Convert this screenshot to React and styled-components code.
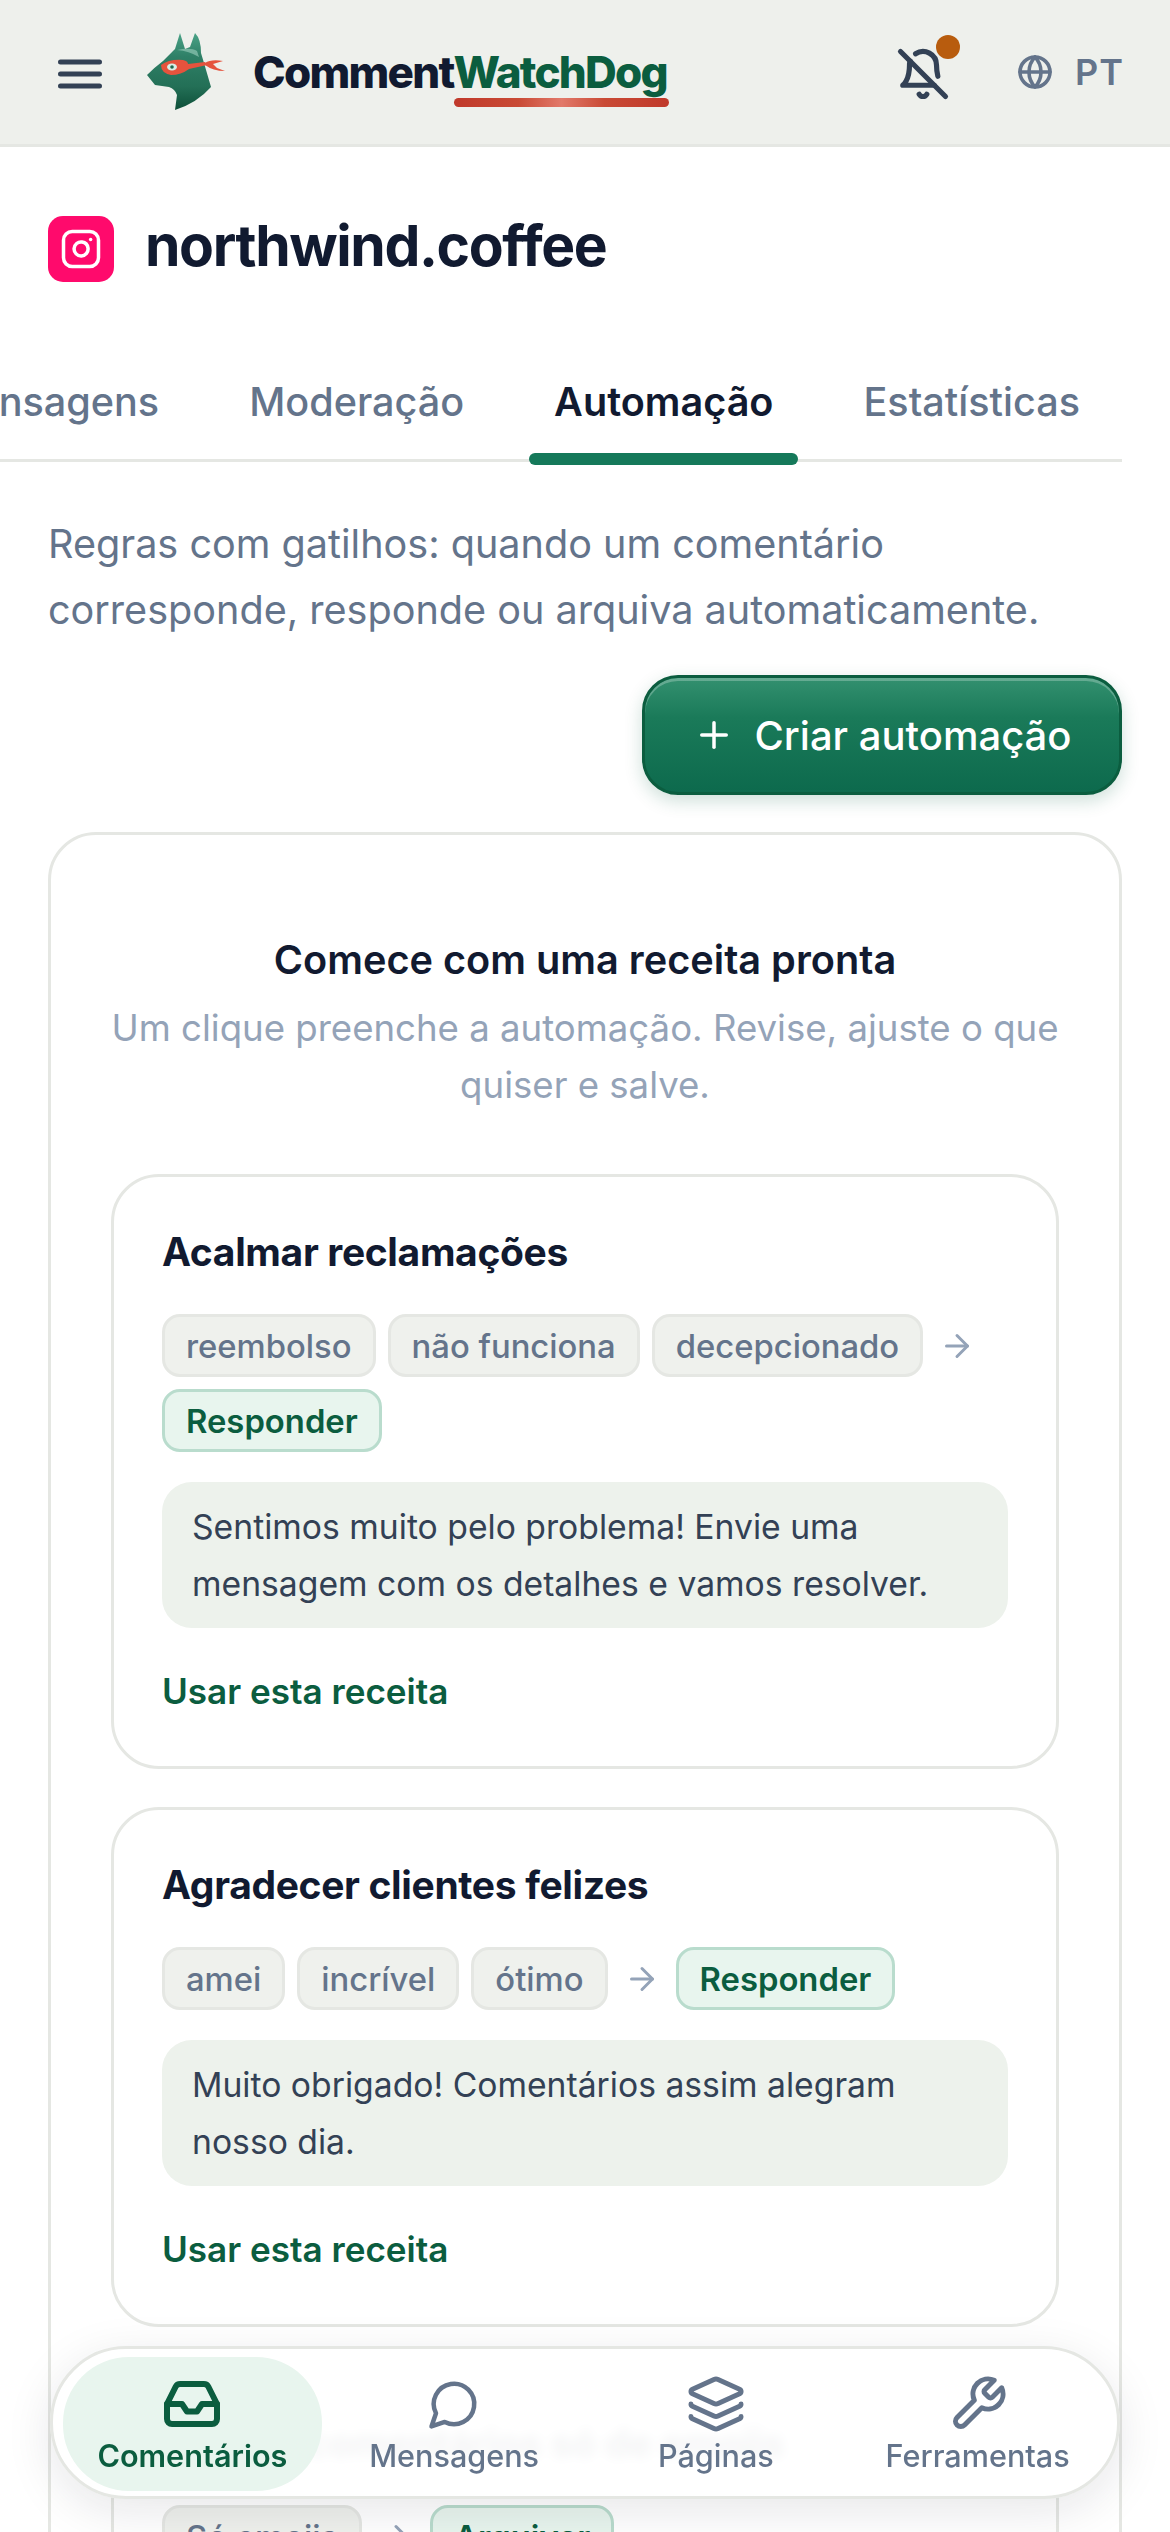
import React from 'react';
import styled, { createGlobalStyle } from 'styled-components';
import { Globe, Plus, Inbox, Layers, ArrowRight, Instagram } from 'lucide-react';

const Global = createGlobalStyle`
  html, body { margin: 0; padding: 0; background: #fff; }
  body { font-family: Inter, "Liberation Sans", sans-serif; width: 1170px; height: 2532px; overflow: hidden; }
  * { box-sizing: border-box; }
`;
const Page = styled.div`width: 1170px; height: 2532px; overflow: hidden; display: flex; flex-direction: column;`;
const Header = styled.header`
  height: 147px; flex: none; background: #eef0ec; border-bottom: 3px solid #e5e7e3;
  display: flex; align-items: center; padding: 0 46px 0 58px;
`;
const MenuBtn = styled.svg`display: block; color: #334155; margin: 3px 45px 0 0; flex: none;`;
const LogoWrap = styled.div`display: flex; align-items: center; gap: 28px; flex: 1;`;
const Word = styled.div`
  font-family: Inter, "Liberation Sans", sans-serif; font-weight: 800; font-size: 44px;
  letter-spacing: -1.75px; color: #111a30; line-height: 1; margin-top: 0;
`;
const WordGreen = styled.span`
  color: #0b5d3f; position: relative; display: inline-block;
  &::after { content: ""; position: absolute; left: 0; right: -2px; bottom: -13px; height: 9px; border-radius: 5px;
    background: linear-gradient(90deg, #c0392b 0%, #c94a35 30%, #e2796a 50%, #c94a35 70%, #c0392b 100%); }
`;
const BellWrap = styled.div`position: relative; display: flex; color: #334155; margin: 3px 67px 0 0;`;
const Dot = styled.span`position: absolute; top: -12px; right: -10px; width: 24px; height: 24px; border-radius: 50%; background: #b85c0e;`;
const Lang = styled.div`display: flex; align-items: center; gap: 22px; color: #64748b; font-size: 36px; font-weight: 600; letter-spacing: 1px; margin-top: -1px;`;
const Main = styled.main`padding: 0 48px; display: flex; flex-direction: column;`;
const TitleRow = styled.div`display: flex; align-items: center; gap: 31px; margin-top: 69px;`;
const IgBadge = styled.div`width: 66px; height: 66px; border-radius: 15px; background: #ff0a6c; color: #fff; display: flex; align-items: center; justify-content: center;`;
const Title = styled.h1`margin: -6px 0 0; font-size: 57px; line-height: 66px; font-weight: 700; letter-spacing: -1.4px; color: #111a30;`;
const Tabs = styled.nav`
  margin: 78px 0 0 -48px; width: 1122px; height: 102px; border-bottom: 3px solid #e5e7e3;
  display: flex; justify-content: flex-end; gap: 40px; padding-right: 17px;
`;
const Tab = styled.div`
  flex: none; padding: 0 25px; height: 99px; line-height: 84px; font-size: 39.6px;
  font-weight: ${p => p.$active ? 600 : 500}; color: ${p => p.$active ? '#111a30' : '#64748b'}; position: relative;
  ${p => p.$active && `&::after { content: ""; position: absolute; left: 0; right: 0; bottom: -6px; height: 12px; border-radius: 6px; background: #15795a; }`}
`;
const Intro = styled.p`margin: 49px 0 0; font-size: 39.6px; line-height: 66px; color: #64748b;`;
const ActionRow = styled.div`display: flex; justify-content: flex-end; margin-top: 32px;`;
const PrimaryBtn = styled.button`
  width: 480px; height: 120px; border-radius: 36px; border: 3px solid #0b5d3f;
  background: linear-gradient(180deg, #33906f 0%, #1a7a59 35%, #0d6a4d 100%);
  box-shadow: inset 0 3px 0 rgba(255,255,255,.25), 0 6px 18px rgba(11,93,63,.2);
  color: #fff; font: 500 40px Inter, sans-serif; display: flex; align-items: center; justify-content: center; gap: 20px;
`;
const Panel = styled.section`
  margin-top: 37px; border: 3px solid #e5e7e3; border-radius: 48px; padding: 95px 60px 0; background: #fff;
  display: flex; flex-direction: column; align-items: stretch;
`;
const PanelTitle = styled.h2`margin: 0; text-align: center; font-size: 39.7px; line-height: 60px; font-weight: 600; color: #111a30;`;
const PanelSub = styled.p`margin: 10px -12px 0; text-align: center; font-size: 36.6px; line-height: 57px; color: #94a3b8;`;
const Recipes = styled.div`display: flex; flex-direction: column; gap: 38px; margin-top: 60px;`;
const Recipe = styled.article`
  border: 3px solid #e5e7e3; border-radius: 48px; padding: 48px 48px 48px; background: #fff;
`;
const RecipeTitle = styled.h3`margin: 0; font-size: 39px; line-height: 54px; font-weight: 700; color: #111a30; letter-spacing: -0.35px;`;
const Chips = styled.div`display: flex; flex-wrap: wrap; align-items: center; gap: 12px; margin-top: 35px;`;
const Chip = styled.span`
  height: 63px; padding: 0 21px; border-radius: 18px; display: inline-flex; align-items: center; font-size: 32.8px; font-weight: ${p => p.$action ? 600 : 500};
  background: ${p => p.$action ? '#e8f5ee' : '#eff1ed'}; border: 3px solid ${p => p.$action ? '#b9dccd' : '#e5e7e3'};
  color: ${p => p.$action ? '#0b5d3f' : '#64748b'};
`;
const Arrow = styled.span`display: inline-flex; color: #94a3b8; margin: 0 4px;`;
const Quote = styled.div`
  margin-top: 30px; padding: 16px 30px; border-radius: 30px; background: #edf2ec; color: #334155;
  font-size: 33.7px; line-height: 57px;
`;
const UseLink = styled.div`margin-top: 36px; font-size: 35.1px; line-height: 54px; font-weight: 600; color: #0b5d3f;`;
const BottomNav = styled.nav`
  position: fixed; left: 50px; top: 2346px; width: 1070px; height: 153px; border-radius: 76px;
  background: rgba(255,255,255,.95); backdrop-filter: blur(6px); border: 3px solid #e5e7e3; box-shadow: 0 12px 48px rgba(15,23,42,.1);
  display: grid; grid-template-columns: repeat(4, 1fr); padding: 8px 10px 5px; gap: 3px;
`;
const NavItem = styled.div`
  border-radius: 66px; display: flex; flex-direction: column; align-items: center; justify-content: center; gap: 1px; padding-top: 3px;
  font-size: 30.6px; line-height: 42px; font-weight: ${p => p.$active ? 600 : 500};
  color: ${p => p.$active ? '#0b5d3f' : '#64748b'}; background: ${p => p.$active ? '#e8f5ee' : 'transparent'};
`;
const LineIcon = styled.svg`display: block; flex: none; fill: none; stroke: currentColor; stroke-width: ${p => p.$weight || 2}; stroke-linecap: round; stroke-linejoin: round;`;

function DogLogo() {
  return (
    <svg width="78" height="78" viewBox="0 0 78 78">
      <defs>
        <linearGradient id="dg" x1="0" y1="0" x2="0" y2="1">
          <stop offset="0" stopColor="#4aa387" />
          <stop offset=".3" stopColor="#2f8067" />
          <stop offset=".7" stopColor="#236f56" />
          <stop offset="1" stopColor="#0d4f38" />
        </linearGradient>
      </defs>
      <path d="M33 0 L38 16 L43 14 L48 0 Q54 6 54 20 L57 30 L64 54 Q50 70 28 77 L30 62 Q28 56 22 54 L8 52 L0 42 Q8 34 16 28 L26 18 L28 16 Z" fill="url(#dg)" />
      <path d="M30 17 Q44 14 50 18 L52 24 Q42 18 30 17 Z" fill="#9fd0bf" opacity=".6" />
      <path d="M14 32 Q22 26 36 27 Q41 28 41 31 L58 29 L60 32 L42 36 Q34 42 24 42 Q14 40 14 32 Z" fill="#e5533d" />
      <ellipse cx="25" cy="34" rx="5" ry="3.5" fill="#d9efe6" />
      <circle cx="25" cy="34" r="1.8" fill="#1f6a50" />
      <path d="M58 30 Q64 26 76 28 L66 31 L70 35 L78 38 Q66 38 58 32 Z" fill="#e5533d" />
    </svg>
  );
}

const recipes = [
  { title: 'Acalmar reclamações', kw: ['reembolso', 'não funciona', 'decepcionado'], act: 'Responder', text: 'Sentimos muito pelo problema! Envie uma mensagem com os detalhes e vamos resolver.' },
  { title: 'Agradecer clientes felizes', kw: ['amei', 'incrível', 'ótimo'], act: 'Responder', text: 'Muito obrigado! Comentários assim alegram nosso dia.' },
  { title: 'Ignorar comentários só de emojis', kw: ['Só emojis'], act: 'Arquivar', text: 'Arquiva automaticamente comentários que têm apenas emojis.' },
];

export default function App() {
  return (
    <Page>
      <Global />
      <Header>
        <MenuBtn width="44" height="30" viewBox="0 0 44 30">
          <path d="M2.5 3h39M2.5 15h39M2.5 27h39" stroke="currentColor" strokeWidth="5" strokeLinecap="round" />
        </MenuBtn>
        <LogoWrap>
          <DogLogo />
          <Word>Comment<WordGreen>WatchDog</WordGreen></Word>
        </LogoWrap>
        <BellWrap>
          <LineIcon $weight={2.3} width="54" height="54" viewBox="0 0 24 24">
            <path d="M8.7 3A6 6 0 0 1 18 8a21.3 21.3 0 0 0 .6 5" />
            <path d="M17 17H3s3-2 3-9a4.67 4.67 0 0 1 .3-1.7" />
            <path d="M10.3 21a1.94 1.94 0 0 0 3.4 0" />
            <path d="m2 2 20 20" />
          </LineIcon>
          <Dot />
        </BellWrap>
        <Lang><Globe size={36} strokeWidth={2.4} />PT</Lang>
      </Header>
      <Main>
        <TitleRow>
          <IgBadge><Instagram size={42} strokeWidth={2} /></IgBadge>
          <Title>northwind.coffee</Title>
        </TitleRow>
        <Tabs>
          <Tab>Mensagens</Tab>
          <Tab>Moderação</Tab>
          <Tab $active>Automação</Tab>
          <Tab>Estatísticas</Tab>
        </Tabs>
        <Intro>Regras com gatilhos: quando um comentário corresponde, responde ou arquiva automaticamente.</Intro>
        <ActionRow><PrimaryBtn><Plus size={42} strokeWidth={2} />Criar automação</PrimaryBtn></ActionRow>
        <Panel>
          <PanelTitle>Comece com uma receita pronta</PanelTitle>
          <PanelSub>Um clique preenche a automação. Revise, ajuste o que quiser e salve.</PanelSub>
          <Recipes>
            {recipes.map(r => (
              <Recipe key={r.title}>
                <RecipeTitle>{r.title}</RecipeTitle>
                <Chips>
                  {r.kw.map(k => <Chip key={k}>{k}</Chip>)}
                  <Arrow><ArrowRight size={36} strokeWidth={2} /></Arrow>
                  <Chip $action>{r.act}</Chip>
                </Chips>
                <Quote>{r.text}</Quote>
                <UseLink>Usar esta receita</UseLink>
              </Recipe>
            ))}
          </Recipes>
        </Panel>
      </Main>
      <BottomNav>
        <NavItem $active><Inbox size={60} strokeWidth={2.4} />Comentários</NavItem>
        <NavItem>
          <LineIcon width="60" height="60" viewBox="-1.33 -1.33 26.67 26.67"><path d="M7.9 20A9 9 0 1 0 4 16.1L2 22Z" /></LineIcon>
          Mensagens
        </NavItem>
        <NavItem><Layers size={60} strokeWidth={2} />Páginas</NavItem>
        <NavItem>
          <LineIcon width="60" height="60" viewBox="0 0 24 24"><path d="M14.7 6.3a1 1 0 0 0 0 1.4l1.6 1.6a1 1 0 0 0 1.4 0l3.77-3.77a6 6 0 0 1-7.94 7.94l-6.91 6.91a2.12 2.12 0 0 1-3-3l6.91-6.91a6 6 0 0 1 7.94-7.94l-3.76 3.76z" /></LineIcon>
          Ferramentas
        </NavItem>
      </BottomNav>
    </Page>
  );
}
